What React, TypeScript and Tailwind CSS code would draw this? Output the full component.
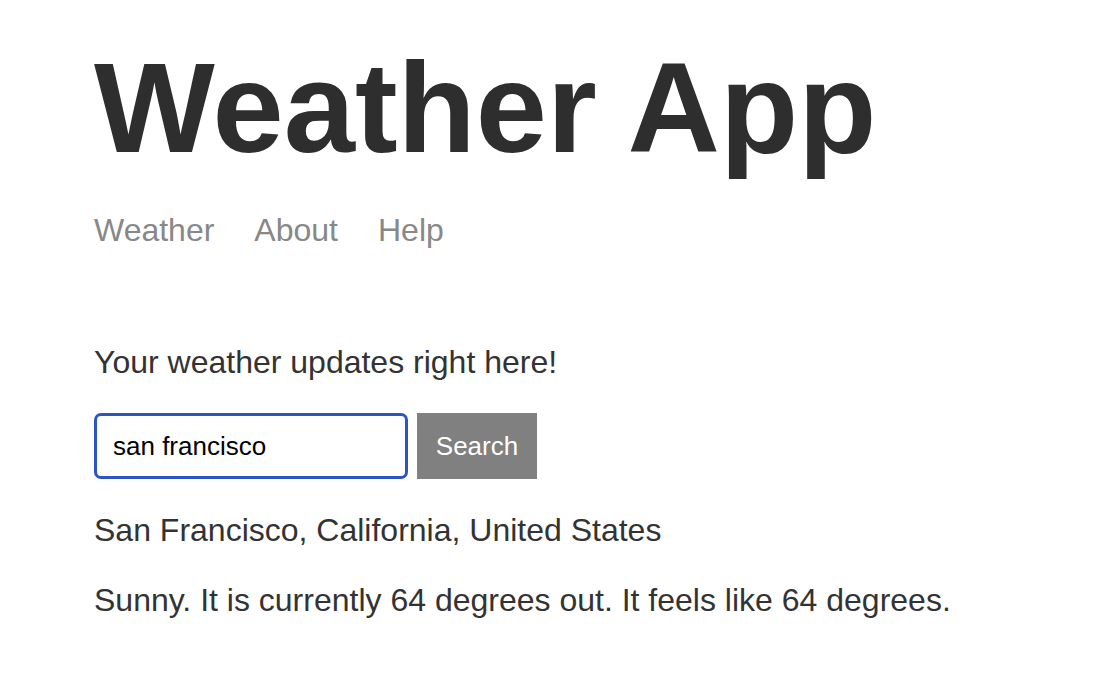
import React, { useState } from 'react';

const App: React.FC = () => {
  const [query, setQuery] = useState('san francisco');

  return (
    <div className="min-h-screen bg-white font-['Liberation_Sans',Arial,sans-serif] text-[#333333]">
      <div className="px-[94px] pt-[44px]">
        <h1 className="text-[128px] leading-[128px] font-bold text-[#2e2e2e]">Weather App</h1>

        <nav className="mt-[38px] flex gap-10 text-[32px] leading-[40px] text-[#888888]">
          <a href="#">Weather</a>
          <a href="#">About</a>
          <a href="#">Help</a>
        </nav>

        <p className="mt-[92px] text-[32px] leading-[40px]">Your weather updates right here!</p>

        <form className="mt-[31px] flex gap-[9px]" onSubmit={(e) => e.preventDefault()}>
          <input
            value={query}
            onChange={(e) => setQuery(e.target.value)}
            className="box-border w-[314px] h-[66px] border-[3px] border-[#2b55c5] rounded-[7px] px-4 text-[26px] text-black outline-none"
          />
          <button type="submit" className="h-[66px] w-[120px] bg-[#808080] text-white text-[26px]">
            Search
          </button>
        </form>

        <p className="mt-[31px] text-[32px] leading-[40px]">San Francisco, California, United States</p>
        <p className="mt-[30px] text-[32px] leading-[40px]">Sunny. It is currently 64 degrees out. It feels like 64 degrees.</p>
      </div>
    </div>
  );
};

export default App;
